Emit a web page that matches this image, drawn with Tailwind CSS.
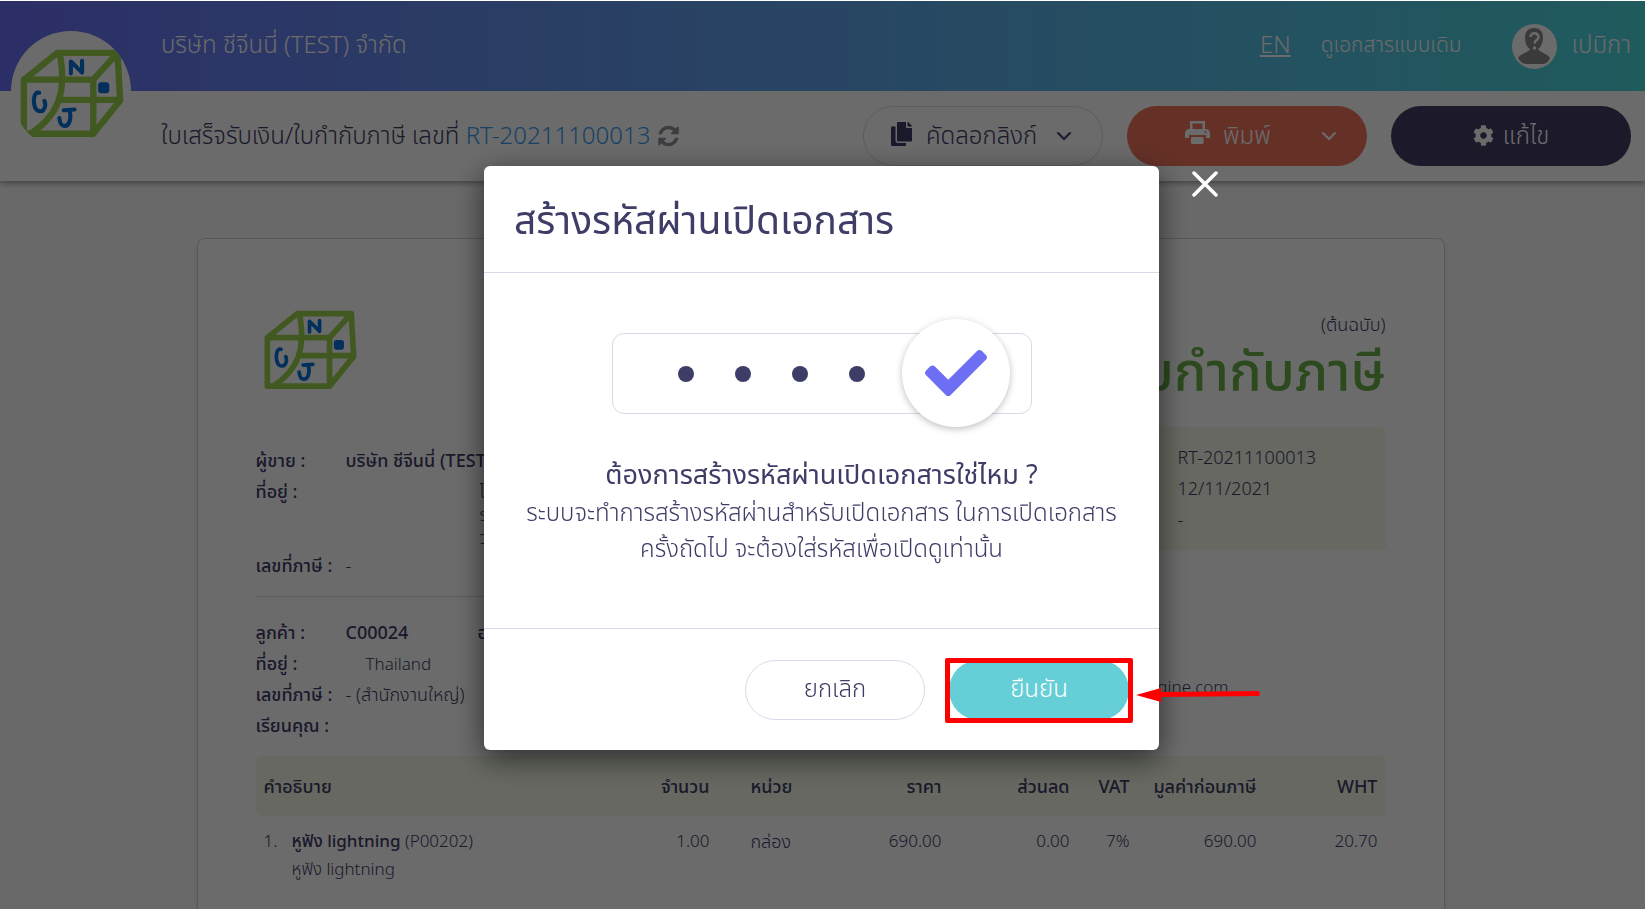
<!DOCTYPE html>
<html lang="th">

<head>
    <meta charset="UTF-8">
    <meta name="viewport" content="width=device-width, initial-scale=1.0">
    <title>RT-20211100013</title>
    <script src="https://cdn.jsdelivr.net/npm/@tailwindcss/browser@4"></script>
</head>

<body class="h-screen overflow-hidden flex flex-col bg-[#fafafa] text-[#3e3d67] font-light font-['Noto_Sans','Noto_Sans_Thai',sans-serif]">

<!-- logo is used twice: header + document -->
<svg class="hidden">
    <symbol id="logo" viewBox="250 270 284 244">
        <g fill="none" stroke="#9bd44f" stroke-width="17" stroke-linejoin="round">
            <path d="M263 355H449V500H263ZM263 355L353 283H514L449 355M514 283L521 411L449 500M350 409H521"/>
            <path d="M359 283C378 385 358 450 280 500"/>
        </g>
        <g fill="none" stroke="#0570d8" stroke-width="11" stroke-linecap="round" stroke-linejoin="round">
            <path d="M389 338V306L419 336V304"/>
            <path d="M304 390C290 386 288 410 291 423C296 445 316 445 320 425Q321 418 318 412"/>
            <path d="M370 437L399 435M385 437C392 460 384 480 371 479Q360 478 358 458"/>
        </g>
        <rect x="462" y="362" width="30" height="29" rx="8" fill="#0570d8"/>
    </symbol>
</svg>

<header class="relative pt-px bg-white shadow-[0_2px_6px_rgba(0,0,0,0.4)]">
    <a href="#" class="absolute left-[11px] top-[31px] size-[120px] rounded-full bg-white overflow-hidden flex items-center justify-center pt-1 pl-[2px]">
        <svg class="w-[106px] h-[91px]"><use href="#logo"/></svg>
    </a>
    <div class="h-[90px] pl-[161px] pr-[14px] flex items-center justify-between text-white text-2xl bg-linear-to-r from-[#6a6ff5] to-[#4bd8de]">
        <div class="pb-1">บริษัท ชีจีนนี่ (TEST) จำกัด</div>
        <nav class="flex items-center">
            <a href="#" class="underline pb-1">EN</a>
            <a href="#" class="ml-[30px] text-[21px] pb-1">ดูเอกสารแบบเดิม</a>
            <a href="#" class="ml-[50px] flex items-center gap-[15px]">
                <svg class="size-[45px]" viewBox="0 0 45 45">
                    <circle cx="22.500" cy="22.500" r="22.500" fill="#fff"/>
                    <path d="M22 4c-6 0-9 4-9 9 0 6 2 10 5 12-1 3-10 5-12 9 2 3 5 6 8 6h17c3 0 6-3 7-6-2-4-11-6-12-9 3-2 5-6 5-12 0-5-3-9-9-9z" fill="#8b8b8b"/>
                    <path d="M18.500 13c0-5 8-5 8 0 0 3-4 3-4 6.500" fill="none" stroke="#fff" stroke-width="2.500"/>
                    <circle cx="22.500" cy="24" r="1.700" fill="#fff"/>
                </svg>
                <span class="pb-1">เปมิกา</span>
            </a>
        </nav>
    </div>
    <div class="h-[90px] pl-[161px] pr-[14px] flex items-center justify-between text-2xl">
        <div class="flex items-center">
            <span class="pb-[2px]">ใบเสร็จรับเงิน/ใบกำกับภาษี เลขที่&nbsp;</span>
            <span class="pb-[2px] text-[#369cf0]">RT-20211100013</span>
            <button aria-label="refresh" class="ml-2 text-[#8f8f9c]">
                <svg class="h-[24px] w-[21px]" viewBox="0 0 1536 1792" fill="currentColor"><path d="M1511 1056q0 5-1 7-64 268-268 434.500t-478 166.500q-146 0-282.500-55t-243.500-157l-129 129q-19 19-45 19t-45-19-19-45v-448q0-26 19-45t45-19h448q26 0 45 19t19 45-19 45l-137 137q71 66 161 102t187 36q134 0 250-65t186-179q11-17 53-117 8-23 30-23h192q13 0 22.500 9.500t9.500 22.500zm25-800v448q0 26-19 45t-45 19h-448q-26 0-45-19t-19-45 19-45l138-138q-148-137-349-137-134 0-250 65t-186 179q-11 17-53 117-8 23-30 23h-199q-13 0-22.500-9.500t-9.500-22.500v-7q65-268 270-434.500t480-166.500q146 0 284 55.500t245 156.500l130-129q19-19 45-19t45 19 19 45z"/></svg>
            </button>
        </div>
        <div class="flex gap-6">
            <button class="w-[240px] h-[60px] rounded-full border border-[#dddce8] pl-[27px] pr-[30px] flex items-center">
                <svg class="w-[21px] h-[24px] -mt-1" viewBox="0 0 448 512" fill="currentColor"><path d="M320 448v40c0 13.255-10.745 24-24 24H24c-13.255 0-24-10.745-24-24V120c0-13.255 10.745-24 24-24h72v296c0 30.879 25.121 56 56 56h168zm0-344V0H152c-13.255 0-24 10.745-24 24v368c0 13.255 10.745 24 24 24h272c13.255 0 24-10.745 24-24V128H344c-13.200 0-24-10.800-24-24zm120.971-31.029L375.029 7.029A24 24 0 0 0 358.059 0H352v96h96v-6.059a24 24 0 0 0-7.029-16.970z"/></svg>
                <span class="ml-[14px] pb-[2px]">คัดลอกลิงก์</span>
                <svg class="ml-auto w-4 h-[10px]" viewBox="0 0 16 10" fill="none" stroke="currentColor" stroke-width="2" stroke-linecap="round"><path d="M2 2l6 6 6-6"/></svg>
            </button>
            <button class="w-[240px] h-[60px] rounded-full bg-[#f0755d] text-white pl-[58px] pr-[30px] flex items-center">
                <svg class="w-[25px] h-[23px] -mt-2" viewBox="0 0 25 23" fill="currentColor"><path d="M5 0h15v8h1c2 0 4 2 4 4v5h-4v-3H4v3H0v-5c0-2 2-4 4-4h1zM7.500 2.500V8h10V2.500zM20.500 10a1 1 0 100 2 1 1 0 000-2z" fill-rule="evenodd"/><rect x="6" y="16" width="12.500" height="7" rx="1"/></svg>
                <span class="ml-[13px] pb-[2px]">พิมพ์</span>
                <svg class="ml-auto w-4 h-[10px]" viewBox="0 0 16 10" fill="none" stroke="currentColor" stroke-width="2" stroke-linecap="round"><path d="M2 2l6 6 6-6"/></svg>
            </button>
            <button class="w-[240px] h-[60px] rounded-full bg-[#403c64] text-white flex items-center justify-center gap-[9px]">
                <svg class="size-[21px] -mt-px" viewBox="0 0 512 512" fill="currentColor"><path d="M487.400 315.700l-42.600-24.600c4.300-23.200 4.300-47 0-70.200l42.600-24.600c4.900-2.800 7.100-8.600 5.500-14-11.100-35.600-30-67.800-54.700-94.600-3.800-4.100-10-5.100-14.800-2.300L380.800 110c-17.900-15.400-38.500-27.300-60.800-35.100V25.800c0-5.600-3.900-10.500-9.400-11.700-36.700-8.200-74.300-7.800-109.200 0-5.500 1.200-9.400 6.100-9.400 11.700V75c-22.200 7.900-42.800 19.800-60.800 35.100L88.700 85.500c-4.900-2.800-11-1.900-14.800 2.300-24.700 26.700-43.600 58.900-54.700 94.600-1.700 5.400.6 11.200 5.500 14L67.300 221c-4.300 23.200-4.300 47 0 70.200l-42.600 24.600c-4.900 2.800-7.100 8.600-5.500 14 11.100 35.600 30 67.800 54.700 94.600 3.800 4.100 10 5.100 14.800 2.300l42.600-24.600c17.900 15.400 38.500 27.300 60.800 35.100v49.200c0 5.600 3.900 10.500 9.400 11.700 36.700 8.200 74.300 7.800 109.200 0 5.500-1.200 9.400-6.100 9.400-11.700v-49.200c22.200-7.900 42.800-19.800 60.800-35.100l42.600 24.600c4.900 2.800 11 1.900 14.800-2.300 24.700-26.700 43.600-58.900 54.700-94.600 1.500-5.500-.7-11.300-5.600-14.100zM256 336c-44.100 0-80-35.900-80-80s35.900-80 80-80 80 35.900 80 80-35.900 80-80 80z"/></svg>
                <span class="pb-[2px]">แก้ไข</span>
            </button>
        </div>
    </div>
</header>

<div class="flex-1 min-h-0 overflow-hidden pt-[57px] pr-1 flex">
<main class="mx-auto w-full max-w-[1248px] rounded-t-lg bg-white border border-b-0 border-[#d0d0d0] shadow-md px-[58px] pt-[70px] text-[17px] leading-[31px]">
    <div class="flex justify-between">
        <svg class="ml-[7px] w-[95px] h-[82px]"><use href="#logo"/></svg>
        <div class="text-right">
            <div class="text-lg leading-[31px]">(ต้นฉบับ)</div>
            <div class="text-[54px] leading-[58px] font-medium text-[#69b047]">ใบเสร็จรับเงิน/ใบกำกับภาษี</div>
        </div>
    </div>

    <div class="mt-[29px] flex justify-between">
        <div class="w-[530px] pt-[18px]">
            <dl class="grid grid-cols-[90px_1fr] pb-[15px] border-b border-[#d5d3ec] *:text-lg *:leading-[31px]">
                <dt class="font-medium">ผู้ขาย :</dt>
                <dd class="font-medium">บริษัท ชีจีนนี่ (TEST) จำกัด</dd>
                <dt class="font-medium">ที่อยู่ :</dt>
                <dd class="h-[74px] pl-[134px] leading-[23px]! pt-1">โน<br>ร<br>ว</dd>
                <dt class="font-medium">เลขที่ภาษี :</dt>
                <dd>-</dd>
            </dl>
            <dl class="mt-[20px] grid grid-cols-[90px_1fr] *:text-lg *:leading-[31px]">
                <dt class="font-medium">ลูกค้า :</dt>
                <dd class="font-medium flex"><span class="w-[132px]">C00024</span>อ</dd>
                <dt class="font-medium">ที่อยู่ :</dt>
                <dd class="pl-5 text-[17px]!">Thailand</dd>
                <dt class="font-medium">เลขที่ภาษี :</dt>
                <dd>- (สำนักงานใหญ่)</dd>
                <dt class="font-medium">เรียนคุณ :</dt>
                <dd></dd>
            </dl>
        </div>
        <div class="w-[480px]">
            <dl class="h-[123px] rounded-md bg-[#f2f8e6] pt-[15px] grid grid-cols-[272px_1fr] auto-rows-[31px] *:text-lg *:leading-[31px]">
                <dt class="font-medium pl-3">เลขที่เอกสาร :</dt>
                <dd>RT-20211100013</dd>
                <dt class="font-medium pl-3">วันที่ออก :</dt>
                <dd>12/11/2021</dd>
                <dt class="font-medium pl-3">อ้างอิง :</dt>
                <dd>-</dd>
            </dl>
            <div class="mt-[121px] w-[323px] text-right">info@engine.com</div>
        </div>
    </div>

    <table class="mt-[15px] w-full table-fixed text-right leading-[28px]">
        <colgroup>
            <col class="w-[300px]"><col class="w-[162px]"><col class="w-[100px]"><col class="w-[132px]"><col class="w-[128px]"><col class="w-[60px]"><col class="w-[127px]"><col>
        </colgroup>
        <thead>
            <tr class="h-[60px] bg-[#f2f8e6] text-lg *:font-medium *:px-2">
                <th class="rounded-l-md text-left">คำอธิบาย</th>
                <th>จำนวน</th>
                <th class="text-left pl-[33px]!">หน่วย</th>
                <th>ราคา</th>
                <th>ส่วนลด</th>
                <th>VAT</th>
                <th class="whitespace-nowrap">มูลค่าก่อนภาษี</th>
                <th class="rounded-r-md">WHT</th>
            </tr>
        </thead>
        <tbody>
            <tr class="*:px-2 *:pt-[11px] align-top">
                <td class="text-left">
                    <div class="flex">
                        <span class="w-[28px]">1.</span>
                        <div><b class="font-medium">หูฟัง lightning</b> (P00202)<br>หูฟัง lightning</div>
                    </div>
                </td>
                <td>1.00</td>
                <td class="text-left pl-[33px]! text-lg">กล่อง</td>
                <td>690.00</td>
                <td>0.00</td>
                <td>7%</td>
                <td>690.00</td>
                <td>20.70</td>
            </tr>
        </tbody>
    </table>
</main>
</div>

<!-- overlay + dialog -->
<div class="fixed inset-0 mt-px bg-black/58 flex justify-center items-start pt-[165px] pr-[2px]">
    <div role="dialog" aria-labelledby="dialog-title" class="relative w-[675px] rounded-md bg-white shadow-[0_8px_30px_rgba(0,0,0,0.6)]">
        <div class="h-[107px] px-[30px] flex items-center border-b border-[#dad9ea]">
            <h1 id="dialog-title" class="text-[39px] font-normal">สร้างรหัสผ่านเปิดเอกสาร</h1>
        </div>
        <div class="h-[355px] pt-[60px] text-center text-2xl leading-[36px]">
            <div class="relative mx-auto w-[420px] h-[81px] rounded-xl border border-[#dad9ea] pl-[65px] flex items-center gap-[41px]">
                <i class="size-4 rounded-full bg-[#3e3d67]"></i>
                <i class="size-4 rounded-full bg-[#3e3d67]"></i>
                <i class="size-4 rounded-full bg-[#3e3d67]"></i>
                <i class="size-4 rounded-full bg-[#3e3d67]"></i>
                <div class="absolute right-[21px] -top-[15px] size-[108px] rounded-full bg-white shadow-[0_2px_7px_rgba(0,0,0,0.25)] flex items-center justify-center">
                    <svg class="size-[62px] text-[#6e6ef5]" viewBox="0 0 512 512" fill="currentColor"><path d="M173.898 439.404l-166.400-166.400c-9.997-9.997-9.997-26.206 0-36.204l36.203-36.204c9.997-9.998 26.207-9.998 36.204 0L192 312.690 432.095 72.596c9.997-9.997 26.207-9.997 36.204 0l36.203 36.204c9.997 9.997 9.997 26.206 0 36.204l-294.400 294.401c-9.998 9.997-26.207 9.997-36.204-.001z"/></svg>
                </div>
            </div>
            <h2 class="mt-[42px] mb-[2px] text-[27px] leading-[36px] font-normal">ต้องการสร้างรหัสผ่านเปิดเอกสารใช่ไหม ?</h2>
            <p>ระบบจะทำการสร้างรหัสผ่านสำหรับเปิดเอกสาร ในการเปิดเอกสาร<br>ครั้งถัดไป จะต้องใส่รหัสเพื่อเปิดดูเท่านั้น</p>
        </div>
        <div class="px-[30px] pt-[31px] pb-[30px] flex justify-end gap-6 border-t border-[#dad9ea] text-2xl">
            <button class="w-[180px] h-[60px] pb-1 rounded-full border border-[#dad9ea]">ยกเลิก</button>
            <div class="relative">
                <button class="w-[180px] h-[60px] pb-1 rounded-full bg-[#66ced7] text-white">ยืนยัน</button>
                <div class="absolute -inset-x-1 -top-[2px] -bottom-[3px] border-5 border-[#ff0000] rounded-xs"></div>
                <svg class="absolute left-[187px] top-[27px] w-[125px] h-[16px]" viewBox="0 0 125 16" fill="#ff0000"><path d="M0 8L25 1V5L122 4Q124 4 124 6.500T122 9L25 10V15Z"/></svg>
            </div>
        </div>
        <button aria-label="close" class="absolute -right-[59px] top-[5px]">
            <svg class="size-[26px] text-white" viewBox="0 0 26 26" fill="none" stroke="currentColor" stroke-width="3.500" stroke-linecap="round"><path d="M2 2l22 22M24 2L2 24"/></svg>
        </button>
    </div>
</div>

</body>
</html>
